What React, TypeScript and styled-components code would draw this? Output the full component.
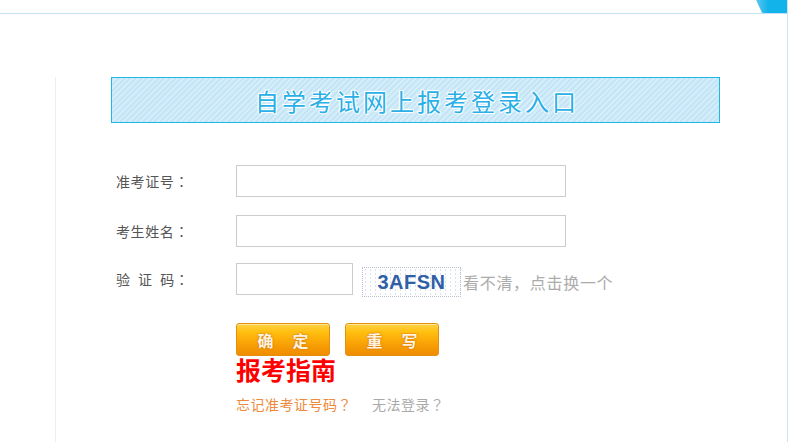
import React from "react";
import styled, { createGlobalStyle } from "styled-components";

const Global = createGlobalStyle`
  html, body { margin: 0; padding: 0; background: #fff; }
  body { font-family: "Noto Sans CJK SC", "Noto Sans", sans-serif; }
`;

const Frame = styled.div`
  width: 787px;
  min-height: 442px;
  border-right: 1px solid #c6e5f6;
  display: flex;
  flex-direction: column;
  overflow: hidden;
`;

const Header = styled.div`
  height: 13px;
  border-bottom: 1px solid #c3e2f3;
  display: flex;
  justify-content: flex-end;
`;

const Corner = styled.div`
  width: 31px;
  height: 13px;
  background: linear-gradient(90deg, #5cc8ef, #12b2ea 40%);
  clip-path: polygon(0 0, 100% 0, 100% 100%, 20% 100%);
`;

const Panel = styled.div`
  flex: 1;
  margin: 63px 0 0 55px;
  border-left: 1px solid #eeeeee;
  display: flex;
  flex-direction: column;
`;

const Banner = styled.div`
  margin-left: 55px;
  width: 607px;
  height: 44px;
  border: 1px solid #1cb7e9;
  background: repeating-linear-gradient(
    135deg,
    #c4e5f7 0px,
    #c4e5f7 2px,
    #d4edf9 2px,
    #d4edf9 4px
  );
  display: flex;
  align-items: center;
  justify-content: center;
`;

const BannerTitle = styled.h1`
  margin: 0;
  font-size: 24px;
  font-weight: 400;
  letter-spacing: 3px;
  text-indent: 3px;
  color: #2aafe6;
  text-shadow: 1px 0 0 #fff, -1px 0 0 #fff, 0 1px 0 #fff, 0 -1px 0 #fff,
    1px 1px 1px #fff, -1px -1px 1px #fff;
`;

const Form = styled.div`
  margin-top: 42px;
  padding-left: 60px;
  display: flex;
  flex-direction: column;
`;

const Row = styled.div<{ $gap: number }>`
  display: flex;
  align-items: flex-start;
  margin-bottom: ${(p) => p.$gap}px;
`;

const Label = styled.label`
  width: 120px;
  height: 32px;
  line-height: 32px;
  font-size: 14px;
  letter-spacing: 0.6px;
  color: #555;
  white-space: pre;
`;

const Colon = styled.span`
  font-family: "Noto Sans CJK JP", sans-serif;
`;

const Input = styled.input<{ $w: number }>`
  box-sizing: border-box;
  width: ${(p) => p.$w}px;
  height: 32px;
  border: 1px solid #cccccc;
  margin: 0;
  padding: 0 4px;
  outline: none;
  background: #fff;
`;

const Captcha = styled.div`
  box-sizing: border-box;
  margin: 4px 0 0 9px;
  width: 99px;
  height: 30px;
  border: 1px dotted #b9c2cc;
  background-color: #fff;
  background-image: radial-gradient(circle, #d5e3f2 0.6px, transparent 0.9px);
  background-size: 5px 4px;
  display: flex;
  align-items: center;
  justify-content: center;
  font-family: "Liberation Sans", Arial, sans-serif;
  font-weight: 700;
  font-size: 20px;
  letter-spacing: 0.5px;
  color: #2f60a6;
`;

const Hint = styled.span`
  margin-top: 4px;
  margin-left: 2px;
  line-height: 30px;
  font-size: 16px;
  letter-spacing: 0.7px;
  color: #ababab;
  cursor: pointer;
`;

const Buttons = styled.div`
  display: flex;
  gap: 15px;
  padding-left: 120px;
`;

const OrangeButton = styled.button`
  box-sizing: border-box;
  width: 94px;
  height: 33px;
  border: 1px solid #e48e12;
  border-radius: 3px;
  background: linear-gradient(
    180deg,
    #ffd24a 0%,
    #ffc010 25%,
    #fcac09 50%,
    #f59a04 75%,
    #ef8c00 100%
  );
  box-shadow: inset 0 1px 0 rgba(255, 240, 180, 0.7);
  font-family: "Noto Sans CJK SC", sans-serif;
  font-size: 16px;
  font-weight: 700;
  letter-spacing: 19px;
  text-indent: 19px;
  color: #fff4e0;
  text-shadow: 0 0 2px #d8750a, 0 0 1px #c96a00;
  padding: 0;
  cursor: pointer;
`;

const Guide = styled.a`
  padding-left: 120px;
  font-size: 25px;
  line-height: 26px;
  font-weight: 700;
  color: #ff0000;
  text-decoration: none;
  font-family: "Noto Sans CJK SC", serif;
`;

const Links = styled.div`
  padding-left: 120px;
  margin-top: 12px;
  display: flex;
  gap: 20px;
  font-size: 14px;
  letter-spacing: 0.5px;
`;

const TextLink = styled.a<{ $color: string }>`
  color: ${(p) => p.$color};
  text-decoration: none;
  cursor: pointer;
`;

const Q = styled.span`
  font-family: "Noto Sans CJK JP", sans-serif;
`;

export default function App() {
  return (
    <>
      <Global />
      <Frame>
        <Header>
          <Corner />
        </Header>
        <Panel>
          <Banner>
            <BannerTitle>自学考试网上报考登录入口</BannerTitle>
          </Banner>
          <Form>
            <Row $gap={18}>
              <Label>
                准考证号<Colon>：</Colon>
              </Label>
              <Input $w={330} />
            </Row>
            <Row $gap={16}>
              <Label>
                考生姓名<Colon>：</Colon>
              </Label>
              <Input $w={330} />
            </Row>
            <Row $gap={26}>
              <Label>
                {"验  证  码"}
                <Colon>：</Colon>
              </Label>
              <Input $w={117} />
              <Captcha>3AFSN</Captcha>
              <Hint>看不清，点击换一个</Hint>
            </Row>
            <Buttons>
              <OrangeButton>确定</OrangeButton>
              <OrangeButton>重写</OrangeButton>
            </Buttons>
            <Guide href="#">报考指南</Guide>
            <Links>
              <TextLink $color="#ee8a3c">
                忘记准考证号码<Q>？</Q>
              </TextLink>
              <TextLink $color="#aaaaaa">
                无法登录<Q>？</Q>
              </TextLink>
            </Links>
          </Form>
        </Panel>
      </Frame>
    </>
  );
}
